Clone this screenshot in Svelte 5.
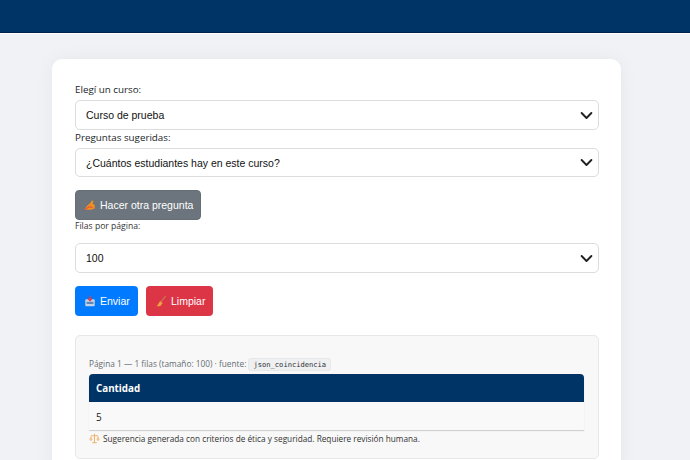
<script>
  const chevron = "M2 5l6 6 6-6";
</script>

<div class="page">
  <header class="top"></header>
  <main class="card">
    <div class="label l1">Elegí un curso:</div>
    <div class="select">
      <span>Curso de prueba</span>
      <svg viewBox="0 0 16 16" width="13" height="13"><path d={chevron} /></svg>
    </div>
    <div class="label l2">Preguntas sugeridas:</div>
    <div class="select short">
      <span>¿Cuántos estudiantes hay en este curso?</span>
      <svg viewBox="0 0 16 16" width="13" height="13"><path d={chevron} /></svg>
    </div>
    <button class="btn grey">
      <svg class="ico" viewBox="0 0 14 14" width="12" height="12">
        <path d="M1 11.500 4 7.500 7 5 9.500 1.500 11 2.500 10 5.500 12.500 7 12.500 11 8 12.500 2 12.500Z" fill="#f19020" />
        <path d="M1 12.500 6 9 10 10" fill="none" stroke="#e8553a" stroke-width="1.400" />
      </svg>
      <span>Hacer otra pregunta</span>
    </button>
    <div class="small">Filas por página:</div>
    <div class="select">
      <span>100</span>
      <svg viewBox="0 0 16 16" width="13" height="13"><path d={chevron} /></svg>
    </div>
    <div class="actions">
      <button class="btn blue">
        <svg class="ico" viewBox="0 0 14 14" width="12" height="12">
          <rect x="1.500" y="5" width="11" height="8" rx="1" fill="#c4d3e4" />
          <rect x="3" y="8" width="8" height="2.500" fill="#5f88b8" />
          <path d="M7 1v5M5 4l2 2.500L9 4" fill="none" stroke="#d8404a" stroke-width="1.800" />
        </svg>
        <span>Enviar</span>
      </button>
      <button class="btn red">
        <svg class="ico" viewBox="0 0 14 14" width="12" height="12">
          <path d="M12.500 1 7 8" stroke="#c9785a" stroke-width="1.200" fill="none" />
          <path d="M6 7 9 9.500 6 13 2 13Z" fill="#f0a040" />
        </svg>
        <span>Limpiar</span>
      </button>
    </div>
    <section class="panel">
      <div class="meta">Página 1 — 1 filas (tamaño: 100) · fuente: <code>json_coincidencia</code></div>
      <table>
        <thead><tr><th>Cantidad</th></tr></thead>
        <tbody><tr><td>5</td></tr></tbody>
      </table>
      <div class="note">
        <svg viewBox="0 0 14 14" width="11" height="11">
          <path d="M7 1v12M4 12.500h6M2.500 3.500h9" stroke="#eeb36a" stroke-width="1.300" fill="none" />
          <path d="M0.500 8 2.500 3.500 4.500 8a2 2 0 0 1-4 0ZM9.500 8l2-4.500 2 4.500a2 2 0 0 1-4 0Z" fill="#f3c48c" />
        </svg>
        <span>Sugerencia generada con criterios de ética y seguridad. Requiere revisión humana.</span>
      </div>
    </section>
  </main>
</div>

<style>
  :global(body) {
    margin: 0;
    background: #f0f2f6;
  }
  .page {
    height: 460px;
    overflow: hidden;
    font-family: "Liberation Sans", Arial, sans-serif;
  }
  .top {
    height: 32px;
    background: #003366;
    border-bottom: 1px solid #00224a;
    box-shadow: 0 1px 0 #fff;
  }
  .card {
    width: 524px;
    margin: 26px 0 0 52px;
    padding: 23px 22px 24px 23px;
    background: #fff;
    border-radius: 10px;
    box-shadow: 0 0 18px rgba(0, 0, 0, 0.05);
    color: #212529;
  }
  .label {
    font-family: "Open Sans", "Noto Sans", sans-serif;
    font-size: 9.800px;
    line-height: 15px;
    height: 15px;
  }
  .l1 {
    margin-bottom: 3px;
  }
  .l2 {
    margin-bottom: 3px;
  }
  .select {
    box-sizing: border-box;
    height: 30px;
    display: flex;
    align-items: center;
    justify-content: space-between;
    padding: 0 5px 0 10px;
    border: 1px solid #dcdcdc;
    border-radius: 5px;
    background: #fff;
    font-size: 10.500px;
    color: #111;
  }
  .short {
    height: 29px;
  }
  .select svg path {
    fill: none;
    stroke: #222;
    stroke-width: 2.400;
    stroke-linecap: round;
    stroke-linejoin: round;
  }
  .btn {
    box-sizing: border-box;
    height: 30px;
    display: flex;
    align-items: center;
    gap: 4px;
    padding: 0 8px;
    border: 1px solid transparent;
    border-radius: 4px;
    font-family: "Liberation Sans", Arial, sans-serif;
    font-size: 10.500px;
    color: #fff;
    white-space: nowrap;
  }
  .ico {
    flex-shrink: 0;
  }
  .grey {
    width: 126px;
    margin-top: 13px;
    background: #6c757d;
    border-color: #666e75;
  }
  .blue {
    width: 63px;
    background: #007bff;
  }
  .red {
    width: 67px;
    background: #dc3545;
  }
  .small {
    font-family: "Open Sans", "Noto Sans", sans-serif;
    font-size: 8.600px;
    line-height: 13px;
    margin-bottom: 10px;
    color: #333;
  }
  .actions {
    display: flex;
    gap: 8px;
    margin-top: 13px;
  }
  .panel {
    box-sizing: border-box;
    height: 124px;
    margin-top: 19px;
    padding: 21px 14px 0 13px;
    background: #f8f8f8;
    border: 1px solid #e6e7e9;
    border-radius: 5px;
  }
  .meta {
    font-family: "Open Sans", "Noto Sans", sans-serif;
    font-size: 8.300px;
    line-height: 14px;
    height: 17px;
    color: #666d73;
    white-space: nowrap;
  }
  code {
    font-family: "DejaVu Sans Mono", monospace;
    font-size: 7.100px;
    font-weight: 400;
    padding: 1px 4px;
    background: #eef0f2;
    border: 1px solid #e6e8ea;
    border-radius: 3px;
    color: #333;
  }
  table {
    width: 100%;
    border-collapse: separate;
    border-spacing: 0;
    border-radius: 4px 4px 0 0;
    overflow: hidden;
    box-shadow: 0 1px 1px rgba(0, 0, 0, 0.18);
  }
  th {
    height: 28px;
    padding: 0 7px;
    box-sizing: border-box;
    background: #003366;
    color: #fff;
    text-align: left;
    font-family: "Open Sans", "Noto Sans", sans-serif;
    font-size: 9.800px;
    font-weight: 700;
  }
  td {
    height: 28px;
    padding: 2px 7px 0;
    box-sizing: border-box;
    background: #f9f9f9;
    font-family: "Open Sans", "Noto Sans", sans-serif;
    font-size: 10px;
    color: #222;
  }
  .note {
    display: flex;
    align-items: center;
    gap: 3px;
    margin-top: 2px;
    font-family: "Open Sans", "Noto Sans", sans-serif;
    font-size: 8.250px;
    line-height: 13px;
    color: #333;
    white-space: nowrap;
  }
</style>
